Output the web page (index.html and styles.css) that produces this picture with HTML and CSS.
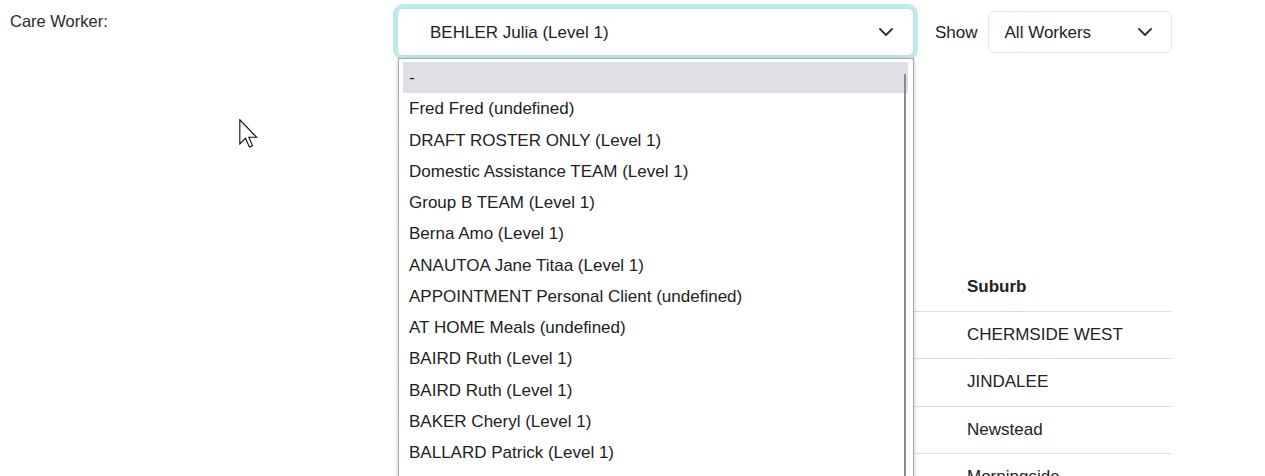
FILE: index.html
```html
<!DOCTYPE html>
<html lang="en">
<head>
<meta charset="utf-8">
<title>Care Worker</title>
<link rel="stylesheet" href="styles.css">
</head>
<body>
<div class="page">
  <div class="toolbar">
    <label class="field-label">Care Worker:</label>
    <div class="worker-wrap">
      <div class="select worker-select">
        <span>BEHLER Julia (Level 1)</span>
        <svg class="chevron" width="14" height="8" viewBox="0 0 14 8"><path d="M1 1l6 6 6-6" fill="none" stroke="#333" stroke-width="1.8" stroke-linecap="round" stroke-linejoin="round"/></svg>
      </div>
      <div class="dropdown">
        <ul class="options">
          <li class="option active">-</li>
          <li class="option">Fred Fred (undefined)</li>
          <li class="option">DRAFT ROSTER ONLY (Level 1)</li>
          <li class="option">Domestic Assistance TEAM (Level 1)</li>
          <li class="option">Group B TEAM (Level 1)</li>
          <li class="option">Berna Amo (Level 1)</li>
          <li class="option">ANAUTOA Jane Titaa (Level 1)</li>
          <li class="option">APPOINTMENT Personal Client (undefined)</li>
          <li class="option">AT HOME Meals (undefined)</li>
          <li class="option">BAIRD Ruth (Level 1)</li>
          <li class="option">BAIRD Ruth (Level 1)</li>
          <li class="option">BAKER Cheryl (Level 1)</li>
          <li class="option">BALLARD Patrick (Level 1)</li>
        </ul>
        <div class="scroll-thumb"></div>
      </div>
    </div>
    <span class="show-label">Show</span>
    <div class="select show-select">
      <span>All Workers</span>
      <svg class="chevron" width="14" height="8" viewBox="0 0 14 8"><path d="M1 1l6 6 6-6" fill="none" stroke="#333" stroke-width="1.8" stroke-linecap="round" stroke-linejoin="round"/></svg>
    </div>
  </div>

  <table class="grid">
    <thead>
      <tr><th class="col-time"></th><th class="col-client"></th><th class="col-suburb">Suburb</th></tr>
    </thead>
    <tbody>
      <tr><td></td><td></td><td>CHERMSIDE WEST</td></tr>
      <tr><td></td><td></td><td>JINDALEE</td></tr>
      <tr><td></td><td></td><td>Newstead</td></tr>
      <tr><td></td><td></td><td>Morningside</td></tr>
    </tbody>
  </table>
</div>
<svg class="cursor" width="19" height="29" viewBox="0 0 12.6 19.4"><path d="M0.5 0.5V16.6L4.3 12.9L6.9 18.7L9 17.8L6.5 12.2H11.7Z" fill="#fff" stroke="#111" stroke-width="0.75" stroke-linejoin="miter"/></svg>
</body>
</html>
```

FILE: styles.css
```css
html, body {
  margin: 0;
  padding: 0;
  background: #fff;
}

body {
  font-family: "Liberation Sans", Arial, sans-serif;
  color: #222;
  font-size: 17px;
}

.page {
  position: relative;
}

.toolbar {
  display: flex;
  align-items: center;
  padding-top: 8px;
}

.field-label {
  align-self: flex-start;
  box-sizing: border-box;
  width: 397px;
  padding-left: 10px;
  margin-top: 3px;
  font-size: 16.5px;
  line-height: 20px;
  color: #2b2b2b;
}

.worker-wrap {
  position: relative;
  width: 517px;
}

.select {
  box-sizing: border-box;
  display: flex;
  align-items: center;
  justify-content: space-between;
  background: #fff;
  border-radius: 6px;
  line-height: 20px;
}

.select span {
  padding-top: 1px;
}

.worker-select {
  height: 48px;
  border: 1px solid #c3dfe0;
  box-shadow: 0 0 0 4px #bdeaea;
  padding: 0 20px 0 32px;
}

.show-label {
  margin-left: 21px;
  padding-top: 1px;
  color: #222;
}

.show-select {
  width: 184px;
  height: 42px;
  margin-left: 10px;
  border: 1px solid #e1e1e4;
  padding: 0 19px 0 16px;
}

.chevron {
  display: block;
  flex: none;
}

.dropdown {
  position: absolute;
  z-index: 5;
  top: 50px;
  left: 1px;
  width: 516px;
  height: 440px;
  box-sizing: border-box;
  background: #fff;
  border: 1px solid #a8a8a8;
  box-shadow: 0 2px 5px rgba(0, 0, 0, 0.22);
  padding: 3px 5px 0 4px;
  overflow: hidden;
}

.options {
  list-style: none;
  margin: 0;
  padding: 0;
}

.option {
  height: 31.25px;
  line-height: 31.25px;
  padding-left: 6px;
  color: #222;
  white-space: nowrap;
}

.option.active {
  background: #e0dfe5;
}

.scroll-thumb {
  position: absolute;
  top: 15px;
  bottom: 0;
  right: 7px;
  width: 2px;
  background: #8a8a8a;
}

.grid {
  margin-top: 207px;
  margin-left: 398px;
  width: 773px;
  border-collapse: collapse;
  table-layout: fixed;
}

.grid th,
.grid td {
  text-align: left;
  padding: 0 0 0 16px;
  white-space: nowrap;
}

.grid th {
  height: 48px;
  font-weight: bold;
}

.grid td {
  height: 46.3px;
  border-top: 1px solid #dcdce2;
}

.col-time { width: 220px; }
.col-client { width: 301px; }
.col-suburb { width: auto; }

.cursor {
  position: absolute;
  left: 239px;
  top: 119px;
  z-index: 10;
}
```
